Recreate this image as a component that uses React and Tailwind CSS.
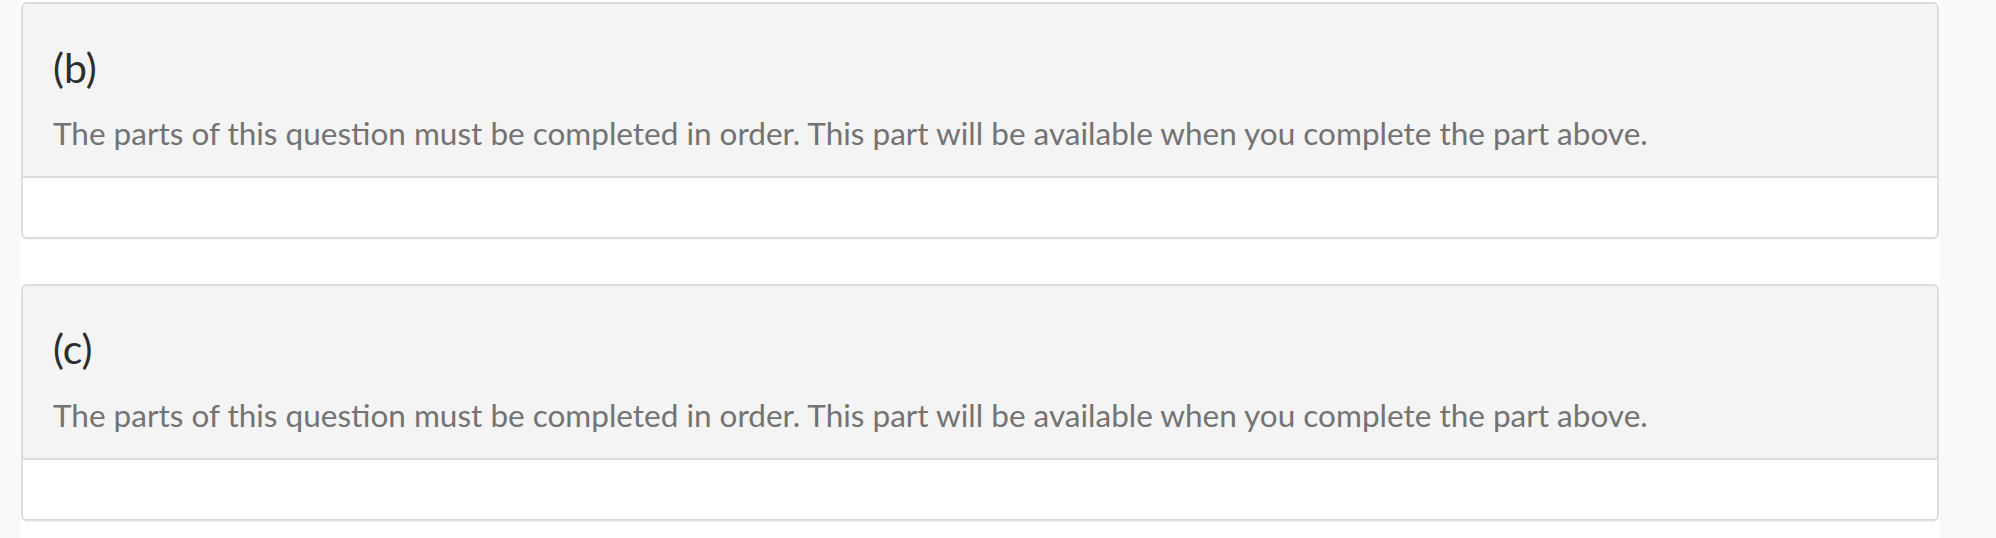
import React from "react";

const parts = ["(b)", "(c)"];

const LockedPart = ({ label }) => (
  <div className="border-2 border-[#dcdcdc] rounded-[6px] bg-white shadow-[0_1px_2px_rgba(0,0,0,0.06)] overflow-hidden">
    <div className="bg-[#f4f4f4] border-b-2 border-[#dcdcdc] pl-[30px] pt-[40.5px] pb-[18.5px]">
      <h3 className="text-[41px] leading-[1.1] text-[#2d2d2d] font-normal">{label}</h3>
      <p className="mt-[20.5px] text-[31.5px] leading-[1.5] text-[#737373]">
        The parts of this question must be completed in order. This part will be available when you complete the part above.
      </p>
    </div>
    <div className="h-[59px]" />
  </div>
);

export default function App() {
  return (
    <div className="flex min-h-[538px] bg-[#f9f9f9] font-['Lato',sans-serif]">
      <div className="w-[20px] shrink-0" />
      <div className="flex-1 bg-white px-[1px] pt-[2px] flex flex-col gap-[45px]">
        {parts.map((p) => (
          <LockedPart key={p} label={p} />
        ))}
      </div>
      <div className="w-[56px] shrink-0" />
    </div>
  );
}
